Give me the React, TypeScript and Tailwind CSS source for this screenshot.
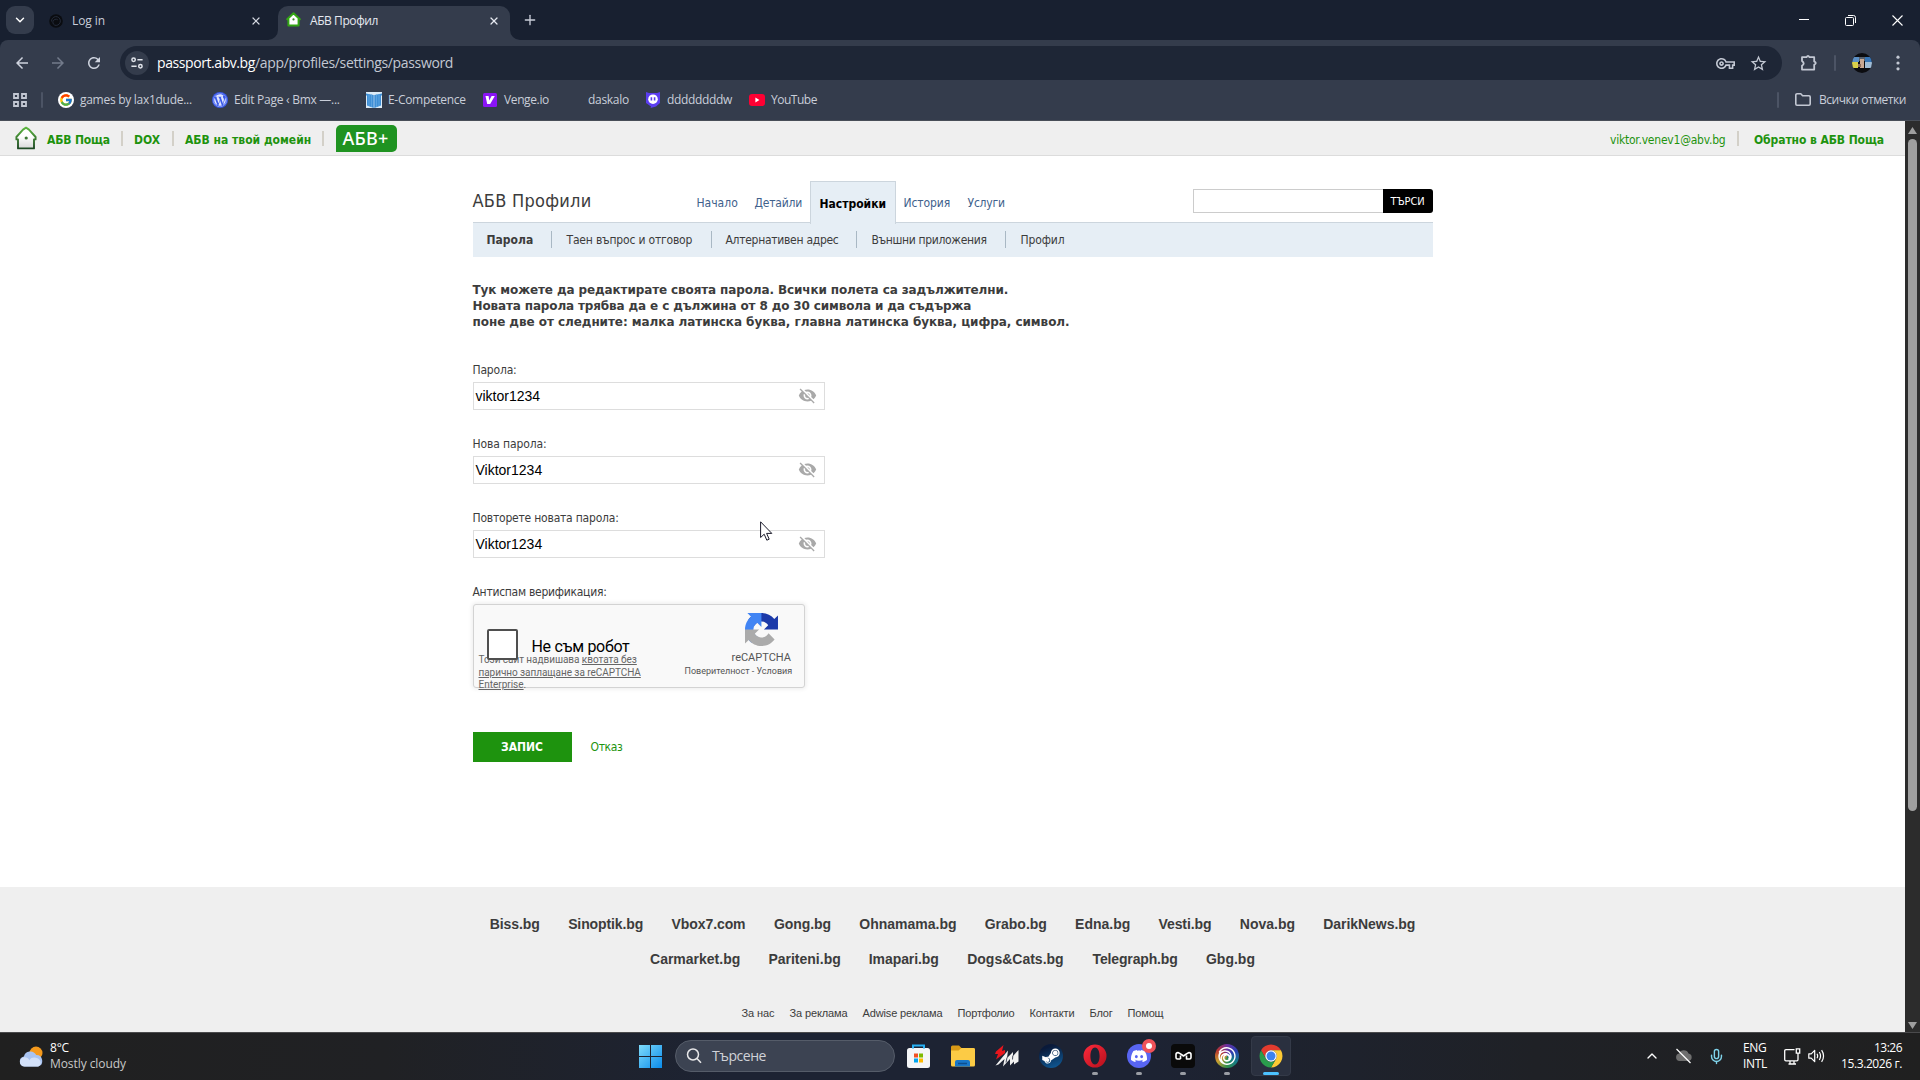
import { ChevronDown, ChevronUp, X, Plus, Mic } from 'lucide-react';
import { FcGoogle } from 'react-icons/fc';
import { FaWordpress, FaSteamSymbol } from 'react-icons/fa';
import { SiDiscord, SiUbisoft } from 'react-icons/si';
import { MdVisibilityOff, MdStarBorder, MdOutlineVpnKey, MdArrowBack, MdArrowForward, MdRefresh } from 'react-icons/md';

const topSites = [
  { name: 'Biss.bg', cls: 'w-[50px] tracking-[-0.08px]' },
  { name: 'Sinoptik.bg', cls: 'w-[75px] tracking-[-0.11px]' },
  { name: 'Vbox7.com', cls: 'w-[74px] tracking-[-0.08px]' },
  { name: 'Gong.bg', cls: 'w-[57px] tracking-[-0.08px]' },
  { name: 'Ohnamama.bg', cls: 'w-[97px]' },
  { name: 'Grabo.bg', cls: 'w-[62px]' },
  { name: 'Edna.bg', cls: 'w-[55px]' },
  { name: 'Vesti.bg', cls: 'w-[53px] tracking-[-0.09px]' },
  { name: 'Nova.bg', cls: 'w-[55px]' },
  { name: 'DarikNews.bg', cls: 'w-[92px] tracking-[-0.05px]' },
];

const moreSites = [
  { name: 'Carmarket.bg', cls: 'w-[90px]' },
  { name: 'Pariteni.bg', cls: 'w-[72px]' },
  { name: 'Imapari.bg', cls: 'w-[70px] tracking-[-0.08px]' },
  { name: 'Dogs&Cats.bg', cls: 'w-[97px]' },
  { name: 'Telegraph.bg', cls: 'w-[85px] tracking-[-0.15px]' },
  { name: 'Gbg.bg', cls: 'w-[49px]' },
];

const aboutLinks = [
  { name: 'За нас', cls: 'w-[33px] tracking-[-0.09px]' },
  { name: 'За реклама', cls: 'w-[58px] tracking-[-0.12px]' },
  { name: 'Adwise реклама', cls: 'w-[80px] tracking-[-0.14px]' },
  { name: 'Портфолио', cls: 'w-[57px] tracking-[-0.17px]' },
  { name: 'Контакти', cls: 'w-[45px] tracking-[-0.1px]' },
  { name: 'Блог', cls: 'w-[23px] tracking-[-0.2px]' },
  { name: 'Помощ', cls: 'w-[36px] tracking-[-0.15px]' },
];

const HouseIcon = () => (
  <svg width="24" height="24" viewBox="0 0 24 24" className="shrink-0">
    <defs>
      <linearGradient id="roof" x1="0" y1="0" x2="0" y2="1">
        <stop offset="0" stopColor="#5cb540" />
        <stop offset="1" stopColor="#1f4a25" />
      </linearGradient>
      <linearGradient id="wall" x1="0" y1="0" x2="0" y2="1">
        <stop offset="0.4" stopColor="#ffffff" />
        <stop offset="1" stopColor="#d9d9d9" />
      </linearGradient>
    </defs>
    <path d="M12 1.6 L15 3.6 L21.6 11 V13.4 H20 V22.4 H4 V13.4 H2.4 V11 L9 3.6 Z" fill="url(#wall)" stroke="url(#roof)" strokeWidth="1.9" strokeLinejoin="round" />
    <circle cx="12.2" cy="12" r="1.6" fill="#3c7a35" />
  </svg>
);

const TabStrip = () => (
  <div className="flex h-10 shrink-0 items-start bg-[#182030] pt-1.5 pl-1.5">
    <div className="flex h-7 w-7 items-center justify-center rounded-[9px] bg-[#343c4c]">
      <ChevronDown className="h-3.5 w-3.5 text-white" strokeWidth={2.5} />
    </div>
    <div className="flex h-[29px] w-[244px] items-center pl-[15px] pr-4">
      <svg width="14" height="14" viewBox="0 0 14 14">
        <circle cx="7" cy="7" r="6.8" fill="#0a0c10" />
        <path d="M2.6 7.5a4.4 4.4 0 1 1 4.6 3.9 3.1 3.1 0 1 1 1.6-5.6" fill="none" stroke="#242b3a" strokeWidth="1" />
      </svg>
      <span className="ml-[9px] w-[33px] whitespace-nowrap text-xs tracking-[-0.09px] text-[#c9ced9]">Log in</span>
      <X className="ml-auto h-3 w-3 text-[#d5d9e2]" strokeWidth={2.4} />
    </div>
    <div className="relative flex h-[34px] w-[232px] items-start rounded-t-[10px] bg-[#343c4c] pl-[8px] pr-[10px]">
      <svg className="absolute -left-2.5 bottom-0" width="10" height="10"><path d="M10 0V10H0A10 10 0 0 0 10 0Z" fill="#343c4c" /></svg>
      <svg className="absolute -right-2.5 bottom-0" width="10" height="10"><path d="M0 0V10H10A10 10 0 0 1 0 0Z" fill="#343c4c" /></svg>
      <div className="flex h-[29px] w-full items-center">
        <svg className="-mt-0.5" width="15" height="15" viewBox="0 0 15 15">
          <path d="M7.5 1.2 L13.8 7.2 H12.6 V13.6 H2.4 V7.2 H1.2 Z" fill="#fff" stroke="#33a514" strokeWidth="2" strokeLinejoin="round" />
          <circle cx="7.5" cy="7.4" r="1.1" fill="#3c8a25" />
        </svg>
        <span className="ml-[9px] w-[68px] whitespace-nowrap text-xs tracking-[-0.42px] text-[#e6e9f0]">АБВ Профил</span>
        <X className="ml-auto h-3 w-3 text-[#e6e9f0]" strokeWidth={2.4} />
      </div>
    </div>
    <Plus className="ml-3 mt-1.5 h-4 w-4 text-[#c9ced9]" strokeWidth={2} />
    <div className="ml-auto flex h-7 items-center gap-9 pr-[17px]">
      <svg width="10" height="10"><path d="M0 4.5H10" stroke="#fff" /></svg>
      <svg width="11" height="11"><path d="M0.5 3.5a1 1 0 0 1 1-1h6a1 1 0 0 1 1 1v6a1 1 0 0 1-1 1h-6a1 1 0 0 1-1-1zM3 0.5h5.5a2 2 0 0 1 2 2V8" fill="none" stroke="#fff" /></svg>
      <svg width="11" height="11"><path d="M0.5 0.5L10.5 10.5M10.5 0.5L0.5 10.5" stroke="#fff" strokeWidth="1.1" /></svg>
    </div>
  </div>
);

const AddressBar = () => (
  <div className="bg-[#182030]">
    <div className="flex h-[46px] items-center rounded-t-lg bg-[#343c4c] pl-[13px]">
      <MdArrowBack className="h-[18px] w-[18px] text-[#ced3de]" />
      <MdArrowForward className="ml-[18px] h-[18px] w-[18px] text-[#737b8b]" />
      <MdRefresh className="ml-[18px] h-[18px] w-[18px] text-[#ced3de]" />
      <div className="ml-[17px] flex h-[34px] w-[1662px] items-center rounded-full bg-[#1e2636] pl-[5px]">
        <div className="flex h-6 w-6 items-center justify-center rounded-full bg-[#343c4c]">
          <svg width="12" height="12" viewBox="0 0 12 12" fill="none" stroke="#e2e5ec" strokeWidth="1.5">
            <circle cx="2.6" cy="2.8" r="1.7" />
            <path d="M6.4 2.8H11.6M0.4 9.2H5.6" />
            <circle cx="9.4" cy="9.2" r="1.7" />
          </svg>
        </div>
        <span className="ml-2 w-[98px] whitespace-nowrap text-sm tracking-[-0.42px] text-white">passport.abv.bg</span>
        <span className="w-[198px] whitespace-nowrap text-sm tracking-[-0.34px] text-[#c3c8d3]">/app/profiles/settings/password</span>
        <MdOutlineVpnKey className="ml-auto h-[19px] w-[19px] text-[#c3c8d3]" />
        <MdStarBorder className="ml-[14px] mr-[14px] h-[19px] w-[19px] text-[#c3c8d3]" />
      </div>
      <svg className="ml-[18px]" width="18" height="18" viewBox="0 0 18 18" fill="none" stroke="#c3c8d3" strokeWidth="1.8" strokeLinejoin="round">
        <path d="M2 3.2H6.5Q8 0.6 9.5 3.2H14.2V7.4Q17.4 9 14.2 10.8V15.6H2V11.8Q5.4 9.4 2 7Z" />
      </svg>
      <div className="ml-[16px] h-4 w-0.5 rounded bg-[#4c5465]" />
      <svg className="ml-[16px]" width="20" height="20" viewBox="0 0 20 20">
        <clipPath id="avatar"><circle cx="10" cy="10" r="10" /></clipPath>
        <g clipPath="url(#avatar)">
          <rect width="20" height="20" fill="#0b0c10" />
          <rect x="0" y="4" width="7" height="5" fill="#5b8fc4" />
          <rect x="0" y="9" width="6" height="6" fill="#d9d04a" />
          <rect x="7" y="4" width="6" height="4" fill="#56606c" />
          <rect x="8" y="6" width="4" height="9" fill="#c9a892" />
          <rect x="6" y="11" width="3" height="3" fill="#8b6b5a" />
          <rect x="13" y="4" width="7" height="5" fill="#3674b5" />
          <rect x="13" y="9" width="7" height="6" fill="#9fbcd6" />
        </g>
      </svg>
      <svg className="ml-[24px]" width="4" height="16" fill="#c3c8d3"><circle cx="2" cy="2.2" r="1.6" /><circle cx="2" cy="8" r="1.6" /><circle cx="2" cy="13.8" r="1.6" /></svg>
    </div>
  </div>
);

const BookmarksBar = () => (
  <div className="flex h-[35px] shrink-0 items-center border-b border-[#484e58] bg-[#343c4c] pb-[7px] pl-[13px] text-xs text-[#c9ced9]">
    <svg width="14" height="14" fill="none" stroke="#c3c8d3" strokeWidth="1.8">
      <path d="M1 1H5V5H1ZM9 1H13V5H9ZM1 9H5V13H1ZM9 9H13V13H9Z" />
    </svg>
    <div className="ml-[14px] h-4 w-0.5 rounded bg-[#4c5465]" />
    <div className="ml-[15px] flex h-4 w-4 items-center justify-center rounded-full bg-white"><FcGoogle className="h-3.5 w-3.5" /></div>
    <span className="ml-[6px] w-[112px] whitespace-nowrap tracking-[-0.28px]">games by lax1dude...</span>
    <div className="ml-5 flex h-4 w-4 items-center justify-center rounded-full bg-[#3858e9]"><FaWordpress className="h-3.5 w-3.5 text-[#dfe5ff]" /></div>
    <span className="ml-[6px] w-[106px] whitespace-nowrap tracking-[-0.27px]">Edit Page ‹ Bmx —...</span>
    <svg className="ml-[26px]" width="16" height="16">
      <rect width="16" height="16" fill="#dcebf7" />
      <path d="M0 1.5L7.7 3V16L1 13.5V4L0 3ZM16 1.5L8.3 3V16L15 13.5V4L16 3Z" fill="#3f8fd6" />
      <path d="M3 2.2V14M5.5 2.6V15M10.5 2.6V15M13 2.2V14" stroke="#5ba3e0" />
    </svg>
    <span className="ml-[6px] w-[78px] whitespace-nowrap tracking-[-0.3px]">E-Competence</span>
    <svg className="ml-[17px]" width="14" height="14">
      <rect width="14" height="14" rx="1.5" fill="#8a14f5" />
      <path d="M2.5 3H5.6L6.2 7.6L8.6 3H11.8L7.2 11H4.2Z" fill="#fff" />
    </svg>
    <span className="ml-[7px] w-[45px] whitespace-nowrap tracking-[-0.38px]">Venge.io</span>
    <span className="ml-[39px] w-[41px] whitespace-nowrap tracking-[-0.3px]">daskalo</span>
    <svg className="ml-[17px]" width="14" height="16">
      <path d="M0 0L3 1H11L14 0V11L10 14.5L4.5 16L5 14.5L0 11Z" fill="#5b3df0" />
      <circle cx="7" cy="7.2" r="4.8" fill="#fff" />
      <path d="M5.4 5.2V8.4M8.6 5.2V8.4" stroke="#5b3df0" strokeWidth="1.6" />
    </svg>
    <span className="ml-[7px] w-[65px] whitespace-nowrap tracking-[-0.35px]">ddddddddw</span>
    <svg className="ml-[17px]" width="16" height="12">
      <rect width="16" height="12" rx="3" fill="#ff0033" />
      <path d="M6.4 3.6V8.4L10.4 6Z" fill="#fff" />
    </svg>
    <span className="ml-[6px] w-[46px] whitespace-nowrap tracking-[-0.48px]">YouTube</span>
    <div className="ml-auto h-4 w-0.5 rounded bg-[#4c5465]" />
    <svg className="ml-4" width="16" height="13" fill="none" stroke="#c3c8d3" strokeWidth="1.6" strokeLinejoin="round">
      <path d="M0.8 2A1.2 1.2 0 0 1 2 0.8H5.8L7.6 2.8H14A1.2 1.2 0 0 1 15.2 4V11A1.2 1.2 0 0 1 14 12.2H2A1.2 1.2 0 0 1 0.8 11Z" />
    </svg>
    <span className="ml-2 mr-[14px] w-[87px] whitespace-nowrap tracking-[-0.45px]">Всички отметки</span>
  </div>
);

const SiteHeader = () => (
  <div className="flex h-[35px] shrink-0 items-center border-b border-[#dcdcdc] bg-[#efefef] pl-3.5 text-xs font-bold text-[#1e930e]">
    <HouseIcon />
    <span className="ml-[9px] w-[63px] whitespace-nowrap pt-[3px] tracking-[-0.16px]">АБВ Поща</span>
    <div className="ml-[11px] mt-px h-[15px] w-0.5 bg-[#d3d0c8]" />
    <span className="ml-[11px] w-[26px] whitespace-nowrap pt-[3px]">DOX</span>
    <div className="ml-3 mt-px h-[15px] w-0.5 bg-[#d3d0c8]" />
    <span className="ml-[11px] w-[126px] whitespace-nowrap pt-[3px]">АБВ на твой домейн</span>
    <div className="ml-[11px] mt-px h-[15px] w-0.5 bg-[#d3d0c8]" />
    <div className="ml-3 flex h-[27px] w-[61px] items-center justify-center rounded-[5px] rounded-bl-none bg-[#1f9321] pb-px">
      <span className="w-[48px] whitespace-nowrap font-['Noto_Sans',sans-serif] text-lg font-medium leading-5 tracking-[0.2px] text-white">АБВ+</span>
    </div>
    <span className="ml-auto w-[115px] whitespace-nowrap pt-[3px] font-normal tracking-[-0.22px]">viktor.venev1@abv.bg</span>
    <div className="ml-3 mt-px h-[15px] w-0.5 bg-[#d3d0c8]" />
    <span className="ml-[15px] mr-[21px] w-[130px] whitespace-nowrap pt-[3px] tracking-[-0.08px]">Обратно в АБВ Поща</span>
  </div>
);

const Divider = ({ className }: { className: string }) => <div className={`-mt-0.5 h-[17px] w-px bg-[#a9b8c4] ${className}`} />;

const ProfileNav = () => (
  <>
    <div className="flex h-[41px] text-xs text-[#41618c]">
      <span className="w-[119px] whitespace-nowrap pt-2 text-lg leading-6 tracking-[0.27px] text-[#3c3c3c]">АБВ Профили</span>
      <span className="ml-[105px] w-[41px] whitespace-nowrap pt-[14px]">Начало</span>
      <span className="ml-[17px] w-[47px] whitespace-nowrap pt-[14px] tracking-[-0.2px]">Детайли</span>
      <div className="relative z-10 -mb-0.5 ml-2 w-[86px] border border-b-0 border-[#ccd5dd] bg-[#e6eef5] pl-[9px] pt-[14px]">
        <span className="block w-[67px] whitespace-nowrap font-bold text-black">Настройки</span>
      </div>
      <span className="ml-2 w-[46px] whitespace-nowrap pt-[14px] tracking-[-0.1px]">История</span>
      <span className="ml-[18px] w-[37px] whitespace-nowrap pt-[14px] tracking-[-0.2px]">Услуги</span>
      <div className="ml-auto mt-2 flex h-6">
        <input className="w-[190px] border border-r-0 border-[#ccc] bg-white" />
        <button className="flex w-[50px] items-center justify-center rounded-r-[3px] bg-black pt-[3px] text-[11px] text-white">
          <span className="w-[34px] whitespace-nowrap tracking-[-0.12px]">ТЪРСИ</span>
        </button>
      </div>
    </div>
    <div className="flex h-[35px] items-center border-t border-[#ccd5dd] bg-[#e6eef5] pl-[14px] text-xs text-[#3c3c3c]">
      <span className="w-[46px] whitespace-nowrap font-bold">Парола</span>
      <Divider className="ml-[18px]" />
      <span className="ml-[15px] w-[126px] whitespace-nowrap tracking-[-0.19px]">Таен въпрос и отговор</span>
      <Divider className="ml-[18px]" />
      <span className="ml-[14px] w-[113px] whitespace-nowrap tracking-[-0.28px]">Алтернативен адрес</span>
      <Divider className="ml-[17px]" />
      <span className="ml-[15px] w-[115px] whitespace-nowrap tracking-[-0.34px]">Външни приложения</span>
      <Divider className="ml-[18px]" />
      <span className="ml-[15px] w-[44px] whitespace-nowrap tracking-[-0.12px]">Профил</span>
    </div>
  </>
);

const PasswordField = ({ label, labelCls, value, valueCls }: { label: string; labelCls: string; value: string; valueCls: string }) => (
  <div className="h-[74px]">
    <div className={`h-5 whitespace-nowrap leading-4 ${labelCls}`}>{label}</div>
    <div className="flex h-7 w-[352px] items-center justify-between border border-[#ddd] bg-white pl-0.5 pr-[7px]">
      <span className={`whitespace-nowrap font-['Liberation_Sans',sans-serif] text-sm text-black ${valueCls}`}>{value}</span>
      <MdVisibilityOff className="-mt-px h-[19px] w-[19px] text-[#a9a9a9]" />
    </div>
  </div>
);

const Recaptcha = () => (
  <div className="relative flex h-[84px] w-[332px] justify-between rounded-[3px] border border-[#d3d3d3] bg-[#f9f9f9] font-['Roboto',sans-serif] shadow-[0_0_4px_1px_rgba(0,0,0,0.08)]">
    <div className="absolute left-[5px] top-[49px] text-[10px] leading-[12.7px] text-[#666]">
      <div className="w-[158px] whitespace-nowrap tracking-[-0.04px]">Този сайт надвишава <span className="underline">квотата без</span></div>
      <div className="w-[162px] whitespace-nowrap tracking-[-0.05px] underline">парично заплащане за reCAPTCHA</div>
      <div className="w-[46px] whitespace-nowrap"><span className="underline">Enterprise</span>.</div>
    </div>
    <div className="relative flex items-start pl-[13px] pt-6">
      <div className="h-[31px] w-[31px] rounded-[2px] border-2 border-[#4f4f4f] bg-white" />
      <span className="ml-[14px] mt-2 w-[98px] whitespace-nowrap text-base leading-5 tracking-[-0.3px] text-black">Не съм робот</span>
    </div>
    <div className="mr-3 flex w-[107px] flex-col items-end pt-2 text-[#555]">
      <svg className="mr-[14px] h-[33px] w-[33px]" viewBox="0 0 64 64">
        <path d="M64 31.955l-.033-1.37V4.687l-7.16 7.16C50.948 4.674 42.033.093 32.05.093c-10.4 0-19.622 4.96-25.458 12.64l11.736 11.86a15.55 15.55 0 0 1 4.754-5.334c2.05-1.6 4.952-2.906 8.968-2.906.485 0 .86.057 1.135.163 4.976.393 9.288 3.14 11.828 7.124l-8.307 8.307L64 31.953" fill="#1c3aa9" />
        <path d="M31.862.094l-1.37.033H4.594l7.16 7.16C4.58 13.147 0 22.06 0 32.046c0 10.4 4.96 19.622 12.64 25.458L24.5 45.768a15.55 15.55 0 0 1-5.334-4.754c-1.6-2.05-2.906-4.952-2.906-8.968 0-.485.057-.86.163-1.135.393-4.976 3.14-9.288 7.124-11.828l8.307 8.307L31.86.095" fill="#4285f4" />
        <path d="M.001 32.045l.033 1.37v25.898l7.16-7.16c5.86 7.173 14.774 11.754 24.76 11.754 10.4 0 19.622-4.96 25.458-12.64l-11.736-11.86a15.55 15.55 0 0 1-4.754 5.334c-2.05 1.6-4.952 2.906-8.968 2.906-.485 0-.86-.057-1.135-.163-4.976-.393-9.288-3.14-11.828-7.124l8.307-8.307c-10.522.04-22.4.066-27.295-.005" fill="#ababab" />
      </svg>
      <span className="mr-px mt-[5px] w-[59px] whitespace-nowrap text-[11px] leading-[14px]">reCAPTCHA</span>
      <span className="w-[107px] whitespace-nowrap text-[9px] leading-3">Поверителност - Условия</span>
    </div>
  </div>
);

const Footer = () => (
  <div className="flex h-[145px] flex-col items-center bg-[#efefef] font-['Liberation_Sans',sans-serif] text-[#3c3c3c]">
    <div className="flex gap-[28.4px] pt-[27px] text-sm font-bold leading-5">
      {topSites.map((s) => <span key={s.name} className={`whitespace-nowrap ${s.cls}`}>{s.name}</span>)}
    </div>
    <div className="flex gap-[28.4px] pt-[15px] text-sm font-bold leading-5">
      {moreSites.map((s) => <span key={s.name} className={`whitespace-nowrap ${s.cls}`}>{s.name}</span>)}
    </div>
    <div className="flex gap-[15px] pt-[34px] text-[11px] leading-5">
      {aboutLinks.map((s) => <span key={s.name} className={`whitespace-nowrap ${s.cls}`}>{s.name}</span>)}
    </div>
  </div>
);

const Scrollbar = () => (
  <div className="flex w-[15px] shrink-0 flex-col items-center bg-[#2c2c2c]">
    <svg className="mt-1.5" width="9" height="8"><path d="M4.5 0L9 7H0Z" fill="#9f9f9f" /></svg>
    <div className="mt-1 h-[672px] w-[9px] rounded-full bg-[#9f9f9f]" />
    <svg className="mb-[3px] mt-auto" width="9" height="8"><path d="M4.5 8L9 1H0Z" fill="#9f9f9f" /></svg>
  </div>
);

const RunDot = () => <div className="absolute -bottom-[7px] left-1/2 h-[3px] w-1.5 -translate-x-1/2 rounded-full bg-[#9a9da4]" />;

const Taskbar = () => (
  <div className="flex h-12 shrink-0 items-center border-t border-[#4a4a4c] bg-[linear-gradient(90deg,#202020_0%,#202124_20%,#1d2333_38%,#1d2333_60%,#1f2126_80%,#202020_100%)] pb-px text-white">
    <div className="flex w-[639px] items-center pl-[19px]">
      <svg width="25" height="21" viewBox="0 0 25 21">
        <circle cx="17" cy="7" r="6.5" fill="#f59a1d" />
        <path d="M5.5 20.5a5 5 0 0 1-.6-9.9A6.6 6.6 0 0 1 17.2 9a5.9 5.9 0 0 1 2 11.5Z" fill="#a9c4f2" />
        <path d="M5.5 20.5a4.6 4.6 0 0 1 0-9.2c2.6 0 4 1.2 4.8 3 2-3.4 5.6-3 8.2-2 3.8 1.7 4.5 6.8.7 8.2Z" fill="#d3e1f9" />
      </svg>
      <div className="ml-[6px] text-xs leading-4">
        <div className="w-[19px] whitespace-nowrap tracking-[-0.19px]">8°C</div>
        <div className="w-[76px] whitespace-nowrap tracking-[-0.07px] text-[#c8c8c8]">Mostly cloudy</div>
      </div>
    </div>
    <svg width="23" height="23">
      <defs><linearGradient id="win" x1="0" y1="0" x2="1" y2="1"><stop offset="0" stopColor="#7fdcfb" /><stop offset="1" stopColor="#0a8bea" /></linearGradient></defs>
      <path d="M0 0H11V11H0ZM12 0H23V11H12ZM0 12H11V23H0ZM12 12H23V23H12Z" fill="url(#win)" />
    </svg>
    <div className="ml-[13px] flex h-8 w-[220px] items-center rounded-full border border-[#555c69] bg-[#3c4352] pl-2.5">
      <svg width="16" height="16" fill="none" stroke="#e8e8ea" strokeWidth="1.5"><circle cx="7" cy="6.5" r="5.5" /><path d="M11 10.5L15 14.8" /></svg>
      <span className="ml-[10px] w-[54px] whitespace-nowrap text-sm tracking-[-0.46px] text-[#d0d2d8]">Търсене</span>
    </div>
    <svg className="ml-3" width="23" height="24" viewBox="0 0 23 24">
      <path d="M6 6V1.5H17V6" fill="none" stroke="#27b0f3" strokeWidth="2" />
      <rect y="4" width="23" height="20" rx="2.5" fill="#f4f5f7" />
      <path d="M6 4.5V3M17 4.5V3" stroke="#27b0f3" strokeWidth="2" />
      <path d="M7 9.5H11V13.5H7Z" fill="#f25022" /><path d="M12 9.5H16V13.5H12Z" fill="#7fba00" />
      <path d="M7 14.5H11V18.5H7Z" fill="#00a4ef" /><path d="M12 14.5H16V18.5H12Z" fill="#ffb900" />
    </svg>
    <svg className="ml-[21px]" width="24" height="22" viewBox="0 0 24 22">
      <path d="M0 2A1.5 1.5 0 0 1 1.5 .5H8L10.5 3H22.5A1.5 1.5 0 0 1 24 4.5V10H0Z" fill="#d99a17" />
      <path d="M0 5.5H7.5L10.5 3H22.5A1.5 1.5 0 0 1 24 4.5V20A1.5 1.5 0 0 1 22.5 21.5H1.5A1.5 1.5 0 0 1 0 20Z" fill="#fccb45" />
      <path d="M4 21.5V17A2 2 0 0 1 6 15H17A2 2 0 0 1 19 17V21.5Z" fill="#1877c9" />
      <path d="M7 18.5H16" stroke="#0d4f8f" strokeWidth="1.5" />
    </svg>
    <svg className="ml-5" width="24" height="22" viewBox="0 0 24 22">
      <path d="M8.5 0L1 6.5L0 9H3L1 14.500L10 8V5L7 6Z" fill="#e8161d" />
      <path d="M13 5.500L0.500 20.500L3.500 19.500L9.500 14L8 21.500L15 14V20.500L19 16.500V19.500L23.500 16.500V5L18 11V7L12 13Z" fill="#f2f2f2" />
      <path d="M12 12.500L11 17.500M17.800 10.500L17.500 14.500" stroke="#1d2333" strokeWidth="0.800" />
    </svg>
    <div className="ml-[20px] flex h-6 w-6 items-center justify-center rounded-full bg-[linear-gradient(160deg,#0a1a3a_20%,#0f5f9e)]"><FaSteamSymbol className="h-5 w-5 text-white" /></div>
    <div className="relative ml-5">
      <svg width="24" height="24" viewBox="0 0 24 24">
        <defs><linearGradient id="opera" x1="0" y1="0" x2="1" y2="1"><stop offset="0" stopColor="#ff2a3c" /><stop offset="1" stopColor="#b5101c" /></linearGradient></defs>
        <path fillRule="evenodd" d="M12 .5A11.5 11.5 0 1 1 12 23.5A11.5 11.5 0 1 1 12 .5ZM12 3.5C8.8 3.5 7.4 8 7.4 12S8.8 20.5 12 20.5S16.6 16 16.6 12S15.2 3.5 12 3.5Z" fill="url(#opera)" />
      </svg>
      <RunDot />
    </div>
    <div className="relative ml-5 flex h-6 w-6 items-center justify-center rounded-full bg-[#5865f2]">
      <SiDiscord className="h-4 w-4" />
      <div className="absolute -right-[5px] -top-[5px] flex h-3.5 w-3.5 items-center justify-center rounded-full bg-[#f0525a]"><div className="h-1.5 w-1.5 rounded-full bg-white" /></div>
      <RunDot />
    </div>
    <div className="relative ml-5 flex h-6 w-6 items-center justify-center rounded-[4px] bg-[#0a0a0a]">
      <svg width="17" height="10" viewBox="0 0 17 10" fill="none" stroke="#fff" strokeWidth="1.6" strokeLinejoin="round">
        <path d="M5.500 8H2.500Q1 8 1 6.500V3.500Q1 1.600 3 1.600Q4 1.600 8.500 5Q13 1.600 14 1.600Q16 1.600 16 3.500V6.500Q16 8 14.500 8H11.500V4.500M5.500 8V4.500" />
      </svg>
      <RunDot />
    </div>
    <div className="relative ml-5 flex h-6 w-6 items-center justify-center rounded-full bg-[conic-gradient(#6b2fa0,#2a3fb0,#157a8a,#2f8f4a,#c9a030,#b8352f,#6b2fa0)]"><SiUbisoft className="h-[18px] w-[18px]" /><RunDot /></div>
    <div className="ml-3 flex h-10 w-10 items-center justify-center rounded-[4px] border border-[#343a48] bg-[#2a303f]">
      <div className="relative">
        <svg width="24" height="24" viewBox="0 0 48 48">
          <path d="M4.1 12.5A23 23 0 0 1 43.9 12.5H24A11.5 11.5 0 0 0 14 29.75Z" fill="#e33b2e" />
          <path d="M43.9 12.5A23 23 0 0 1 24 47L34 29.75A11.5 11.5 0 0 0 24 12.5Z" fill="#fcc934" />
          <path d="M24 47A23 23 0 0 1 4.1 12.5L14 29.75A11.5 11.5 0 0 0 34 29.75Z" fill="#2a9d4c" />
          <circle cx="24" cy="24" r="11.5" fill="#fff" />
          <circle cx="24" cy="24" r="9" fill="#3b82f0" />
        </svg>
        <div className="absolute -bottom-[7px] left-1/2 h-[3px] w-4 -translate-x-1/2 rounded-full bg-[#4cc2ff]" />
      </div>
    </div>
    <ChevronUp className="ml-auto h-4 w-4" strokeWidth={2} />
    <svg className="ml-[15px]" width="18" height="16" viewBox="0 0 18 16">
      <path d="M4.5 13a3.8 3.8 0 0 1-.4-7.5A5 5 0 0 1 13.5 5.5a3.8 3.8 0 0 1 0 7.5Z" fill="#6e6e6e" />
      <path d="M1.5 1L15.5 15" stroke="#fff" strokeWidth="1.3" />
    </svg>
    <Mic className="ml-[15px] h-[17px] w-[17px] text-[#7fd3ea]" strokeWidth={2} />
    <div className="ml-[18px] text-xs leading-4">
      <div className="w-[23px] whitespace-nowrap tracking-[-0.38px]">ENG</div>
      <div className="w-[24px] whitespace-nowrap tracking-[-0.32px]">INTL</div>
    </div>
    <svg className="ml-[17px]" width="17" height="17" fill="none" stroke="#fff" strokeWidth="1.3">
      <path d="M10.5 1.6H2A1.3 1.3 0 0 0 .7 3V11.5A1.3 1.3 0 0 0 2 12.8H12.8A1.3 1.3 0 0 0 14 11.5V7M4.5 16H12M6 13V16M10 13V16M12.3 .8H15.7V5.2H12.3ZM14 5.2V8" />
    </svg>
    <svg className="ml-[7px]" width="18" height="14" fill="none" stroke="#fff" strokeWidth="1.2">
      <path d="M.8 4.8H3.2L6.7 1.3V12.7L3.2 9.2H.8ZM9 4.8Q10.3 7 9 9.2M11.3 3Q13.8 7 11.3 11M13.6 1.2Q17.5 7 13.6 12.8" strokeLinejoin="round" />
    </svg>
    <div className="ml-[15px] mr-[18px] flex flex-col items-end text-xs leading-4">
      <div className="w-[28px] whitespace-nowrap tracking-[-0.52px]">13:26</div>
      <div className="w-[61px] whitespace-nowrap tracking-[-0.4px]">15.3.2026 г.</div>
    </div>
  </div>
);

export default function App() {
  return (
    <div className="flex h-[1080px] w-[1920px] flex-col overflow-hidden bg-white font-['Open_Sans','Noto_Sans',sans-serif]">
      <TabStrip />
      <AddressBar />
      <BookmarksBar />
      <div className="flex min-h-0 flex-1">
        <div className="relative flex flex-1 flex-col font-['DejaVu_Sans_Condensed','Noto_Sans',sans-serif]">
          <SiteHeader />
          <div className="mx-auto w-[960px] flex-1 pt-[25px] text-xs text-[#3c3c3c]">
            <ProfileNav />
            <div className="pt-[25px] font-['DejaVu_Sans',sans-serif] font-bold leading-4">
              <div className="w-[536px] whitespace-nowrap tracking-[-0.12px]">Тук можете да редактирате своята парола. Всички полета са задължителни.</div>
              <div className="w-[499px] whitespace-nowrap tracking-[-0.14px]">Новата парола трябва да е с дължина от 8 до 30 символа и да съдържа</div>
              <div className="w-[597px] whitespace-nowrap tracking-[-0.06px]">поне две от следните: малка латинска буква, главна латинска буква, цифра, символ.</div>
            </div>
            <div className="pt-8">
              <PasswordField label="Парола:" labelCls="w-[44px] tracking-[-0.19px]" value="viktor1234" valueCls="w-[65px]" />
              <PasswordField label="Нова парола:" labelCls="w-[74px] tracking-[-0.12px]" value="Viktor1234" valueCls="w-[67px]" />
              <PasswordField label="Повторете новата парола:" labelCls="w-[146px] tracking-[-0.21px]" value="Viktor1234" valueCls="w-[67px]" />
              <div className="h-5 w-[134px] whitespace-nowrap leading-4 tracking-[-0.27px]">Антиспам верификация:</div>
              <Recaptcha />
            </div>
            <div className="flex items-center pt-11 text-[#1e930e]">
              <button className="flex h-[30px] w-[99px] items-center justify-center bg-[#1e930e] font-bold text-white">
                <span className="w-[42px] whitespace-nowrap">ЗАПИС</span>
              </button>
              <span className="ml-[19px] w-[32px] whitespace-nowrap tracking-[-0.33px]">Отказ</span>
            </div>
          </div>
          <Footer />
          <svg className="absolute left-[760px] top-[400px]" width="13" height="21" viewBox="0 0 13 21">
            <path d="M.6 .8V16.5L4.2 13.2L6.8 19.2L9.2 18.2L6.6 12.4H11.8Z" fill="#fff" stroke="#1a1a2a" />
          </svg>
        </div>
        <Scrollbar />
      </div>
      <Taskbar />
    </div>
  );
}
